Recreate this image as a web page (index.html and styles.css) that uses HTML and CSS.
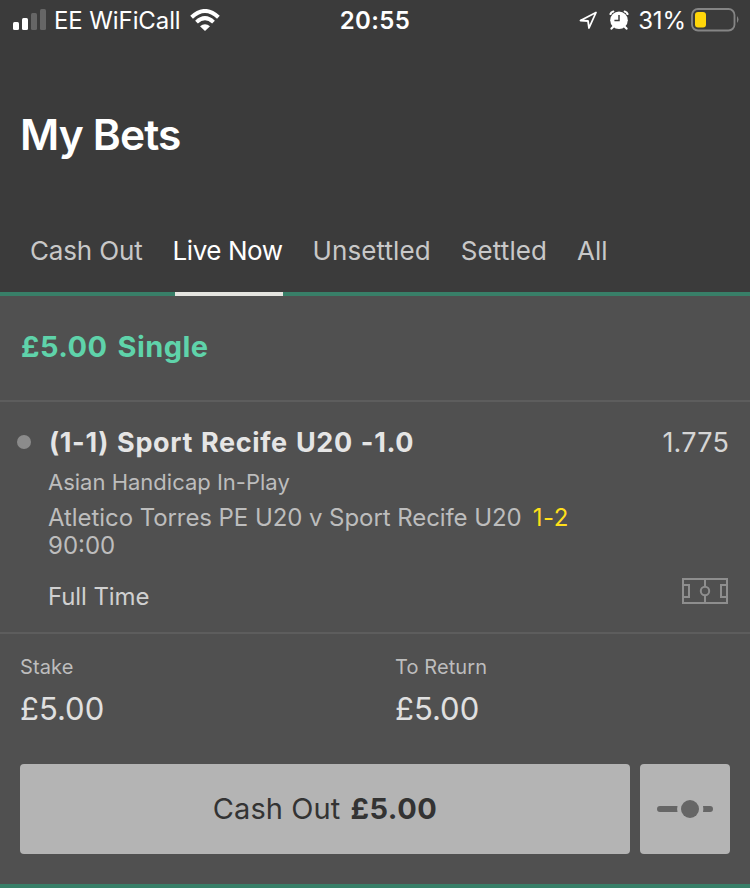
FILE: index.html
```html
<!DOCTYPE html>
<html lang="en">
<head>
<meta charset="utf-8">
<title>My Bets</title>
<link rel="stylesheet" href="styles.css">
</head>
<body>
<header class="header">
  <div class="status">
    <div class="status-left">
      <svg class="signal" width="34" height="22" viewBox="0 0 34 22"><rect x="0" y="13" width="6" height="8" rx="1.5" fill="#fff"/><rect x="9" y="9" width="6" height="12" rx="1.5" fill="#fff"/><rect x="18" y="4" width="6" height="17" rx="1.5" fill="#666"/><rect x="27" y="0" width="6" height="21" rx="1.5" fill="#666"/></svg>
      <span class="carrier">EE WiFiCall</span>
      <svg class="wifi" width="30" height="22" viewBox="0 0 30 22" fill="none" stroke="#fff" stroke-width="4"><path d="M1.6 8.2Q15-4.2 28.4 8.2"/><path d="M6.5 13.1Q15 5.1 23.5 13.1"/><path d="M10 17.2Q15 13.2 20 17.2L15 22Z" fill="#fff" stroke="none"/></svg>
    </div>
    <time class="clock">20:55</time>
    <div class="status-right">
      <svg class="location" width="19" height="19" viewBox="0 0 19 19" fill="none" stroke="#fff" stroke-width="1.8" stroke-linejoin="round"><path d="M17 1.5L1.5 9.5L9 10L10 17Z"/></svg>
      <svg class="alarm" width="20" height="20" viewBox="0 0 20 20"><g fill="none" stroke="#fff" stroke-width="2.2" stroke-linecap="round"><path d="M1.5 4Q2 2 4.3 1.5M18.5 4Q18 2 15.7 1.5M4 17L2.5 18.6M16 17L17.5 18.6"/></g><circle cx="10" cy="10.3" r="8.8" fill="#fff"/><path d="M10 5V10.6H5.4" fill="none" stroke="#3b3b3b" stroke-width="1.5"/></svg>
      <span class="percent">31%</span>
      <svg class="battery" width="48" height="24" viewBox="0 0 48 24"><rect x="1" y="1" width="42.5" height="21.5" rx="6" fill="none" stroke="#858585" stroke-width="1.8"/><rect x="4" y="4" width="11" height="15.5" rx="3" fill="#ffd60a"/><path d="M46 8Q49 11.5 46 15Z" fill="#858585"/></svg>
    </div>
  </div>
  <h1 class="title">My Bets</h1>
  <nav class="tabs">
    <a class="tab tab-cash">Cash Out</a>
    <a class="tab active">Live Now</a>
    <a class="tab tab-wide">Unsettled</a>
    <a class="tab tab-wide">Settled</a>
    <a class="tab">All</a>
  </nav>
</header>
<main class="bet">
  <h2 class="bet-heading">£5.00 Single</h2>
  <section class="selection">
    <span class="bullet"></span>
    <div class="details">
      <div class="pick-row"><h3 class="pick">(1-1) Sport Recife U20 -1.0</h3><span class="odds">1.775</span></div>
      <p class="market">Asian Handicap In-Play</p>
      <p class="fixture"><span class="teams">Atletico Torres PE U20 v Sport Recife U20</span><span class="score">1-2</span></p>
      <p class="time">90:00</p>
      <div class="stage-row"><span class="stage">Full Time</span>
        <svg class="pitch" width="46" height="26" viewBox="0 0 46 26" fill="none" stroke="#8e8e8e" stroke-width="2"><path d="M1 1H45V25H1ZM1 7H7V19H1M45 7H39V19H45M23 1V8.5M23 17.5V25"/><circle cx="23" cy="13" r="4.2"/></svg>
      </div>
    </div>
  </section>
  <section class="amounts">
    <div class="amount"><span class="label">Stake</span><span class="value">£5.00</span></div>
    <div class="amount"><span class="label">To Return</span><span class="value">£5.00</span></div>
  </section>
  <div class="actions">
    <button class="cashout"><span class="cashout-label">Cash Out</span><b class="cashout-value">£5.00</b></button>
    <button class="slider" aria-label="Partial cash out"><svg width="56" height="18" viewBox="0 0 56 18" fill="#666"><path d="M3 6H20.5Q19.7 9 20.5 12H3A3 3 0 0 1 3 6ZM46 6H53A3 3 0 0 1 53 12H46Q46.7 9 46 6Z"/><circle cx="33" cy="9" r="9"/></svg></button>
  </div>
</main>
</body>
</html>
```
FILE: styles.css
```css
* { box-sizing: border-box; margin: 0; padding: 0; }
body { width: 750px; height: 888px; overflow: hidden; background: #505050; color: #e5e5e5; font-family: Inter, "Liberation Sans", sans-serif; }
svg { display: block; flex: none; }
span, b, a, time, h1, h2, h3, p { white-space: nowrap; }
.header { height: 296px; background: #3b3b3b; border-bottom: 4px solid #387f68; }
.status { display: grid; grid-template-columns: 1fr auto 1fr; height: 40px; line-height: 42px; color: #fff; font-size: 24px; }
.status-left, .status-right { display: flex; align-items: center; height: 40px; }
.status-left { padding-left: 13px; }
.carrier, .percent { padding-top: 2px; }
.carrier { margin-left: 7px; letter-spacing: -0.1px; }
.wifi { margin-left: 9px; }
.clock { font-weight: 600; letter-spacing: 0.4px; }
.status-right { justify-content: flex-end; padding-right: 11px; }
.location { margin-right: 11px; }
.alarm { margin-right: 9px; }
.percent { letter-spacing: -0.1px; }
.battery { margin-left: 5px; }
.title { margin: 65px 0 0 20px; font-size: 42.5px; line-height: 60px; font-weight: 600; letter-spacing: -0.85px; color: #fff; }
.tabs { display: flex; gap: 30px; height: 131px; padding: 66px 0 0 30px; font-size: 26px; line-height: 40px; color: #c8c8c8; }
.tab { height: 65px; }
.tab-cash { letter-spacing: -0.15px; }
.tab-wide { letter-spacing: 0.1px; }
.active { margin-right: -2px; padding-right: 2px; letter-spacing: -0.45px; color: #fff; background: linear-gradient(#e5e5e0, #e5e5e0) 2.5px 61px / 108px 4px no-repeat; }
.bet-heading { height: 106px; padding-left: 21px; border-bottom: 2px solid #5d5d5d; font-size: 29px; line-height: 101px; font-weight: 700; letter-spacing: 0.4px; word-spacing: 3px; color: #5fd3aa; }
.selection { display: flex; height: 232px; padding: 20px 21px 0 17px; border-bottom: 2px solid #5d5d5d; }
.bullet { flex: none; width: 14px; height: 14px; margin: 13px 17px 0 0; border-radius: 50%; background: #8b8b8b; }
.details { flex: 1; color: #bdbdbd; }
.pick-row { display: flex; justify-content: space-between; height: 40px; line-height: 42px; }
.pick { padding-left: 1px; font-size: 27px; font-weight: 700; letter-spacing: 0.65px; word-spacing: 1px; color: #e5e5e5; }
.odds { font-size: 27px; letter-spacing: 0.2px; color: #d5d5d5; }
.market { font-size: 22px; line-height: 40px; }
.fixture { display: flex; gap: 11px; height: 32px; font-size: 24px; line-height: 32px; }
.teams { letter-spacing: -0.07px; }
.score { letter-spacing: 0.6px; color: #ffdf1b; }
.time { font-size: 24px; line-height: 24px; }
.stage-row { display: flex; justify-content: space-between; height: 60px; padding-top: 19px; }
.stage { font-size: 24px; line-height: 40px; letter-spacing: -0.1px; color: #d0d0d0; }
.pitch { margin: 1px 1px 0 0; }
.amounts { display: grid; grid-template-columns: 375px 1fr; height: 130px; padding: 18px 0 0 20px; }
.amount { display: flex; flex-direction: column; }
.label { font-size: 20px; line-height: 30px; letter-spacing: 0.1px; color: #bdbdbd; }
.value { font-size: 31px; line-height: 53px; color: #e0e0e0; }
.actions { display: grid; grid-template-columns: 610px 90px; gap: 10px; height: 124px; padding: 0 20px; border-bottom: 4px solid #387f68; }
.cashout, .slider { display: flex; align-items: center; justify-content: center; height: 90px; border: 0; border-radius: 4px; background: #b4b4b4; color: #333; font: 29px/90px Inter, "Liberation Sans", sans-serif; }
.cashout { gap: 10px; }
.cashout-label { letter-spacing: 0.1px; }
.cashout-value { font-weight: 700; letter-spacing: 0.5px; }
```
